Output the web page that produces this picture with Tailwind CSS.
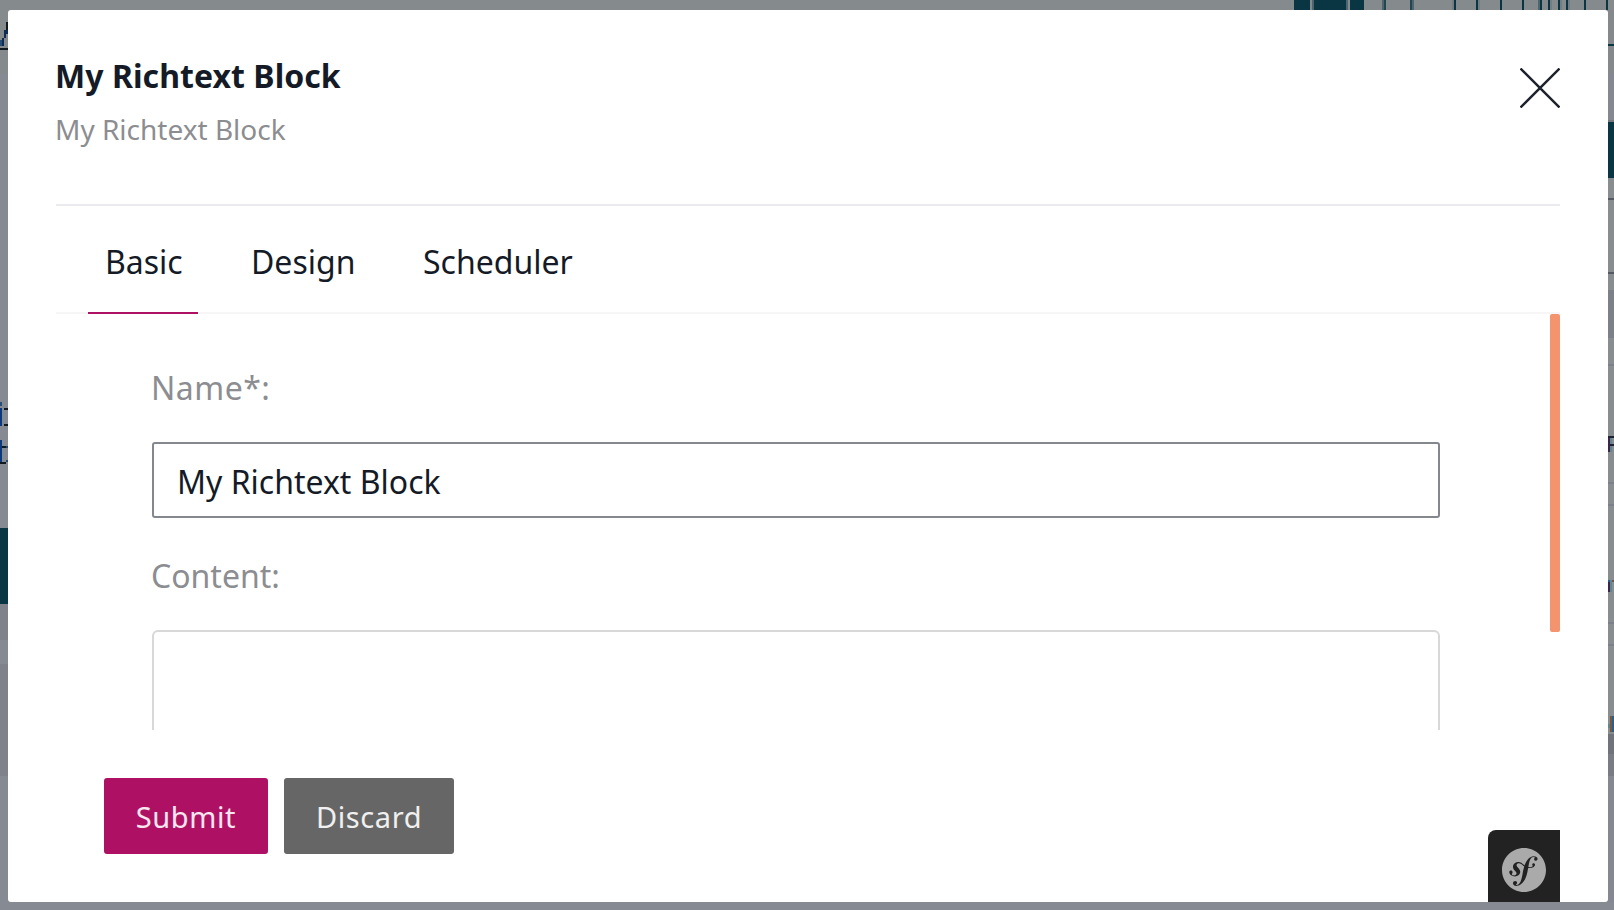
<!DOCTYPE html>
<html lang="en">
<head>
<meta charset="utf-8">
<title>My Richtext Block</title>
<script src="https://cdn.jsdelivr.net/npm/@tailwindcss/browser@4"></script>
</head>
<body class="grid h-screen w-screen grid-cols-[8px_1600px_6px] grid-rows-[10px_892px_8px] overflow-hidden bg-[#858a8d] font-['Noto_Sans',sans-serif] text-[#141b26]">
  <!-- dimmed page behind the dialog -->
  <div class="col-span-3 flex">
    <svg class="h-[10px] w-full" viewBox="0 0 1614 10" shape-rendering="crispEdges">
      <path fill="#0a3542" d="M1294 0h16v10h-16zM1314 0h32v10h-32zM1350 0h14v10h-14zM1454 0h2v10h-2zM1476 0h2v10h-2zM1500 0h2v10h-2zM1522 0h2v10h-2zM1540 0h2v10h-2zM1548 0h2v10h-2zM1558 0h2v10h-2zM1566 0h2v10h-2zM1584 0h2v10h-2zM1606 0h2v10h-2z"/>
      <path fill="#4c656e" d="M1312 0h2v10h-2zM1346 0h2v10h-2zM1382 0h2v10h-2zM1410 0h4v10h-4zM1538 0h2v10h-2z"/>
      <path fill="#214652" d="M1384 0h2v10h-2zM1410 0h2v10h-2z"/>
      <path fill="#737d82" d="M1452 0h2v10h-2zM1478 0h2v10h-2zM1550 0h2v10h-2zM1560 0h2v10h-2zM1568 0h2v10h-2z"/>
    </svg>
  </div>
  <svg class="h-[892px] w-2" viewBox="0 10 8 892" shape-rendering="crispEdges">
    <path fill="#858a8d" d="M0 10h8v64h-8z"/>
    <path fill="#868a93" d="M0 74h8v828h-8z"/>
    <path fill="#101820" d="M0 48h8v2h-8zM6 22h2v8h-2zM4 408h4v2h-4zM4 424h4v2h-4zM0 446h6v2h-6zM0 462h6v2h-6z"/>
    <path fill="#0d2c55" d="M6 30h2v4h-2zM4 30h2v8h-2zM2 38h2v8h-2z"/>
    <path fill="#274d72" d="M0 40h2v6h-2zM0 402h2v4h-2zM6 446h2v2h-2zM6 460h2v2h-2z"/>
    <path fill="#0a3a7c" d="M0 408h2v18h-2zM0 440h2v22h-2z"/>
    <path fill="#0a3542" d="M0 528h8v76h-8z"/>
    <path fill="#7f828a" d="M0 604h8v36h-8zM0 664h8v112h-8z"/>
  </svg>

  <main class="flex flex-col rounded-[3px] bg-white px-12">
    <header class="flex h-[196px] shrink-0 justify-between border-b-2 border-[#ebebef]">
      <div class="-ml-px flex flex-col pt-[44px]">
        <h1 class="h-[53px] text-[32px] leading-[44px] font-bold tracking-[0.05px]">My Richtext Block</h1>
        <p class="text-[28px] leading-[44px] text-[#8c8d91]">My Richtext Block</p>
      </div>
      <button aria-label="Close" class="mt-[58px] size-10">
        <svg class="size-10" viewBox="0 0 40 40" fill="none" stroke="#1d222c" stroke-width="2.4"><path d="M.5.5l39 39M39.5.5L.5 39.5"/></svg>
      </button>
    </header>

    <nav class="flex h-[108px] shrink-0 border-b-2 border-[#f6f6f6] pl-8 text-[32px] leading-[44px]">
      <a class="-mb-0.5 w-[110px] border-b-2 border-[#ae1164] pt-[34px] pl-[17px]">Basic</a>
      <a class="ml-[53px] w-[172px] pt-[34px]">Design</a>
      <a class="pt-[34px]">Scheduler</a>
    </nav>

    <div class="flex h-[416px] shrink-0 justify-between overflow-hidden pl-24">
      <form class="flex w-[1288px] flex-col text-[32px] leading-[44px] text-[#8c8d91]">
        <label class="-ml-px mt-[52px] h-[76px] shrink-0 tracking-[0.5px]">Name*:</label>
        <div class="flex h-[76px] shrink-0 items-center rounded-[3px] border-2 border-[#84888e] pl-[23px] text-[#141b26]"><span class="pt-[3px]">My Richtext Block</span></div>
        <label class="-ml-px mt-[36px] h-[76px] shrink-0">Content:</label>
        <div class="h-[200px] shrink-0 rounded-md border-2 border-[#d8d8d8]"></div>
      </form>
      <div class="h-[318px] w-[10px] rounded-[2px] bg-[#f4946e]"></div>
    </div>

    <footer class="flex flex-1 justify-between pl-12">
      <div class="flex gap-4 pt-12 text-[29px] leading-[77px] tracking-[0.6px] text-white/90">
        <button class="h-[76px] w-[164px] rounded-[3px] bg-[#ae1164]">Submit</button>
        <button class="h-[76px] w-[170px] rounded-[3px] bg-[#666666]">Discard</button>
      </div>
      <div class="flex size-[72px] items-center justify-center self-end rounded-tl-lg bg-[#222222] pt-2">
        <svg class="size-11" viewBox="0 0 24 24" fill="#aaaaaa"><path d="M24 12c0 6.628-5.372 12-12 12S0 18.628 0 12 5.372 0 12 0s12 5.372 12 12zm-6.753-7.561c-1.22.042-2.283.715-3.075 1.644-.878 1.02-1.461 2.229-1.881 3.461-.753-.614-1.332-1.414-2.539-1.761-.966-.297-2.015-.105-2.813.514-.41.319-.71.757-.861 1.254-.36 1.176.381 2.225.719 2.6l.737.79c.15.154.519.56.339 1.138-.193.631-.951 1.037-1.732.799-.348-.106-.848-.366-.734-.73.045-.15.152-.263.21-.391.052-.11.077-.194.095-.242.141-.465-.053-1.07-.551-1.223-.465-.143-.939-.03-1.125.566-.209.68.117 1.913 1.86 2.449 2.04.628 3.765-.484 4.009-1.932.153-.907-.255-1.582-1.006-2.447l-.612-.677c-.371-.37-.497-1.002-.114-1.485.324-.409.785-.584 1.539-.379 1.103.3 1.594 1.063 2.412 1.68-.338 1.11-.56 2.223-.759 3.222l-.123.746c-.585 3.07-1.033 4.757-2.194 5.726-.234.166-.57.416-1.073.434-.266.005-.352-.176-.355-.257-.006-.184.15-.271.255-.353.154-.083.39-.224.372-.674-.016-.532-.456-.994-1.094-.973-.477.017-1.203.465-1.176 1.286.028.85.819 1.485 2.012 1.444.638-.021 2.062-.281 3.464-1.949 1.633-1.911 2.09-4.101 2.434-5.706l.383-2.116c.213.024.441.042.69.048 2.032.044 3.049-1.01 3.064-1.776.01-.464-.304-.921-.744-.91-.386.009-.718.278-.806.654-.094.428.646.813.068 1.189-.41.266-1.146.452-2.184.3l.188-1.042c.386-1.976.859-4.407 2.661-4.467.132-.007.612.006.623.323.003.105-.022.134-.147.375-.115.155-.174.345-.168.537.017.504.4.836.957.816.743-.023.955-.748.945-1.119-.032-.874-.952-1.424-2.17-1.386z"/></svg>
      </div>
    </footer>
  </main>

  <svg class="h-[892px] w-[6px]" viewBox="1608 10 6 892" shape-rendering="crispEdges">
    <path fill="#85898c" d="M1608 10h6v64h-6z"/>
    <path fill="#858890" d="M1608 74h6v46h-6z"/>
    <path fill="#76797d" d="M1608 120h6v2h-6z"/>
    <path fill="#0a3542" d="M1608 44h6v2h-6zM1608 122h6v56h-6z"/>
    <path fill="#888d90" d="M1608 178h6v556h-6z"/>
    <path fill="#555960" d="M1608 198h6v2h-6zM1608 272h6v2h-6z"/>
    <path fill="#7c8087" d="M1608 290h6v48h-6zM1608 364h6v2h-6zM1608 482h6v2h-6zM1608 504h6v2h-6zM1608 622h6v2h-6zM1608 644h6v2h-6z"/>
    <path fill="#1e2230" d="M1608 436h6v2h-6zM1610 444h4v2h-4z"/>
    <path fill="#3d2448" d="M1608 438h2v14h-2zM1608 582h2v10h-2z"/>
    <path fill="#5f8790" d="M1610 438h2v6h-2zM1610 446h2v6h-2zM1610 580h2v12h-2zM1608 724h2v4h-2z"/>
    <path fill="#7a5740" d="M1612 580h2v2h-2zM1610 716h2v16h-2z"/>
    <path fill="#27608b" d="M1612 716h2v16h-2zM1608 580h2v2h-2z"/>
    <path fill="#70747a" d="M1608 734h6v20h-6z"/>
    <path fill="#797d83" d="M1608 754h6v22h-6z"/>
    <path fill="#858890" d="M1608 776h6v126h-6z"/>
  </svg>
  <div class="col-span-3 bg-[#868a93]"></div>
</body>
</html>
